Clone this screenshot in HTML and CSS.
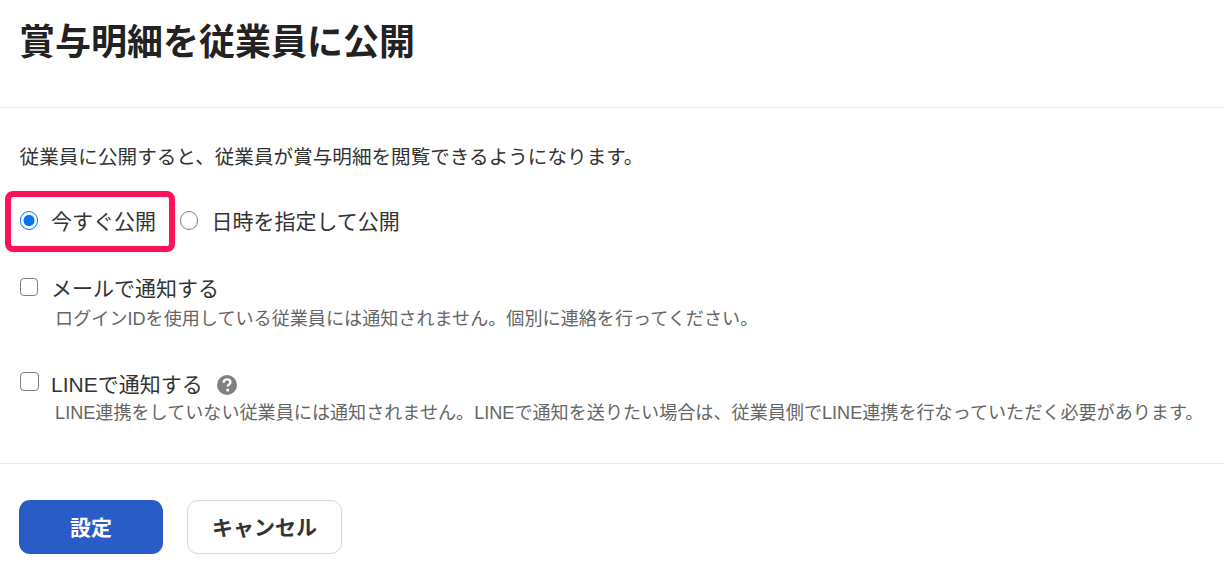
FILE: index.html
```html
<!DOCTYPE html>
<html lang="ja">
<head>
    <meta charset="UTF-8">
    <meta name="viewport" content="width=device-width, initial-scale=1.0">
    <title>賞与明細を従業員に公開</title>
    <link rel="stylesheet" href="styles.css">
</head>
<body>
    <header class="modal-header">
        <h1>賞与明細を従業員に公開</h1>
    </header>

    <main class="modal-body">
        <p class="lead">従業員に公開すると、従業員が賞与明細を閲覧できるようになります。</p>

        <div class="radio-row">
            <label class="radio highlighted">
                <input type="radio" name="publish" checked>
                <span>今すぐ公開</span>
            </label>
            <label class="radio">
                <input type="radio" name="publish">
                <span>日時を指定して公開</span>
            </label>
        </div>

        <div class="notify mail">
            <label class="check">
                <input type="checkbox">
                <span>メールで通知する</span>
            </label>
            <p class="note">ログインIDを使用している従業員には通知されません。個別に連絡を行ってください。</p>
        </div>

        <div class="notify line">
            <label class="check">
                <input type="checkbox">
                <span>LINEで通知する</span>
                <svg class="help" viewBox="0 0 20 20" width="20" height="20" aria-hidden="true">
                    <circle cx="10" cy="10" r="10" fill="#808080"/>
                    <path d="M6.6 7.7c0-2 1.4-3.3 3.5-3.3 2 0 3.3 1.2 3.3 2.8 0 1.2-.6 2-1.6 2.6-.9.5-1.1 1-1.1 1.8" fill="none" stroke="#fff" stroke-width="2.4"/>
                    <circle cx="10.7" cy="15" r="1.5" fill="#fff"/>
                </svg>
            </label>
            <p class="note">LINE連携をしていない従業員には通知されません。LINEで通知を送りたい場合は、従業員側でLINE連携を行なっていただく必要があります。</p>
        </div>
    </main>

    <footer class="modal-footer">
        <button class="btn btn-primary">設定</button>
        <button class="btn btn-default">キャンセル</button>
    </footer>
</body>
</html>
```

FILE: styles.css
```css
body {
    margin: 0;
    font-family: "Liberation Sans", "Noto Sans CJK JP", sans-serif;
    color: #333;
    background: #fff;
}
h1, p {
    margin: 0;
}
input {
    appearance: none;
    box-sizing: border-box;
    margin: 0;
    flex: none;
    background: #fff;
    border: 1.5px solid #808080;
}
input[type="checkbox"] {
    border-radius: 4px;
}
input[type="radio"] {
    width: 18.5px;
    height: 18.5px;
    border-radius: 50%;
}
input[type="radio"]:checked {
    border: 1.6px solid #0075ff;
    background: radial-gradient(circle, #0075ff 0 5.2px, #fff 5.8px);
}
.modal-header {
    height: 108px;
    padding: 19px 20px 0 19px;
    box-sizing: border-box;
    border-bottom: 1px solid #e8e8e8;
}
.modal-header h1 {
    font-size: 36px;
    line-height: 48px;
    font-weight: bold;
    color: #222;
}
.modal-body {
    height: 356px;
    padding: 35px 0 0 19.6px;
    box-sizing: border-box;
    border-bottom: 1px solid #e8e8e8;
}
.lead {
    font-size: 19.6px;
    line-height: 28px;
}
.radio-row {
    display: flex;
    margin-top: 36px;
}
.radio {
    display: flex;
    align-items: flex-start;
    gap: 13px;
    font-size: 21px;
    line-height: 30px;
    margin-right: 23.9px;
}
.radio input {
    margin-top: 4px;
}
.highlighted {
    position: relative;
}
.highlighted::after {
    content: "";
    position: absolute;
    left: -14.6px;
    right: -19.1px;
    top: -16px;
    bottom: -15px;
    border: 6px solid #ff1159;
    border-radius: 8px;
}
.check {
    display: flex;
    align-items: flex-start;
    font-size: 21px;
    line-height: 28px;
}
.mail {
    margin-top: 38px;
}
.mail .check {
    gap: 13.1px;
    margin-bottom: 3px;
}
.mail .check input {
    width: 18px;
    height: 18px;
    margin: 2.5px 0 0 0.4px;
}
.line {
    margin-top: 38.5px;
}
.line .check {
    gap: 12.3px;
    margin-bottom: 1.5px;
}
.line .check input {
    width: 19.2px;
    height: 19.2px;
    margin-top: 1px;
}
.note {
    font-size: 18.1px;
    line-height: 26px;
    color: #666;
    padding-left: 35.5px;
}
.help {
    margin: 4px 0 0 1.5px;
}
.modal-footer {
    display: flex;
    gap: 24px;
    padding: 36px 19px 0;
}
.btn {
    height: 54px;
    border-radius: 11px;
    font-family: inherit;
    font-size: 21px;
    font-weight: bold;
    padding: 0 0 2px;
}
.btn-primary {
    width: 144px;
    border: none;
    background: #2a5cc8;
    color: #fff;
}
.btn-default {
    width: 155px;
    border: 1px solid #d9d9d9;
    background: #fff;
    color: #333;
}
```
